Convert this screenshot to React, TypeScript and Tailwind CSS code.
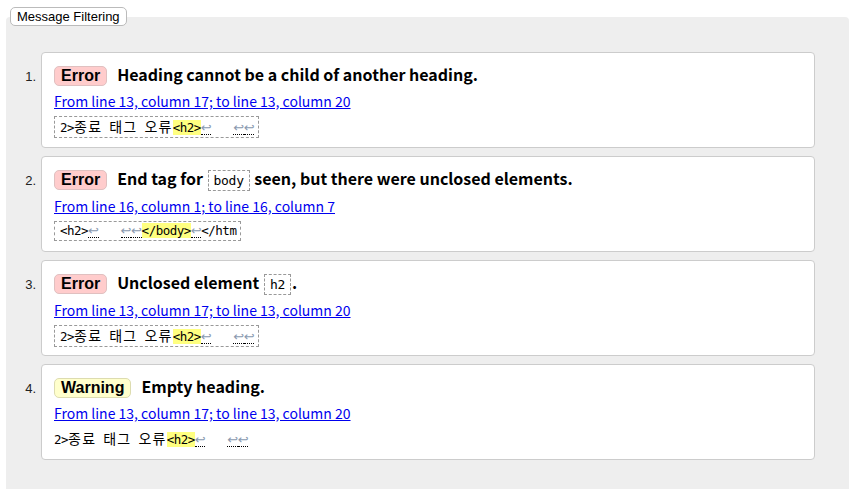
import React from 'react';

type Part = { t: string; kind?: 'hl' | 'lf' | 'gap' | 'ko' };

interface Message {
  level: 'Error' | 'Warning';
  text: React.ReactNode;
  loc: string;
  extract: Part[];
  boxed: boolean;
}

const koFont = "font-['Noto_Sans_CJK_KR','Liberation_Sans',sans-serif]";
const monoFont = "font-['DejaVu_Sans_Mono','Noto_Sans_CJK_KR',monospace]";

const Code = ({ children }: { children: React.ReactNode }) => (
  <code className={`${monoFont} font-normal text-[13px] tracking-[-0.3px] border border-dashed border-[#999] px-[5px] py-[2px] mx-[1px]`}>
    {children}
  </code>
);

const h2Extract: Part[] = [
  { t: '2>' },
  { t: '종료', kind: 'ko' },
  { t: ' ' },
  { t: '태그', kind: 'ko' },
  { t: ' ' },
  { t: '오류', kind: 'ko' },
  { t: '<h2>', kind: 'hl' },
  { t: '↩', kind: 'lf' },
  { t: '', kind: 'gap' },
  { t: '↩', kind: 'lf' },
  { t: '↩', kind: 'lf' },
];

const messages: Message[] = [
  {
    level: 'Error',
    text: <>Heading cannot be a child of another heading.</>,
    loc: 'From line 13, column 17; to line 13, column 20',
    extract: h2Extract,
    boxed: true,
  },
  {
    level: 'Error',
    text: <>End tag for <Code>body</Code> seen, but there were unclosed elements.</>,
    loc: 'From line 16, column 1; to line 16, column 7',
    extract: [
      { t: '<h2>' },
      { t: '↩', kind: 'lf' },
      { t: '', kind: 'gap' },
      { t: '↩', kind: 'lf' },
      { t: '↩', kind: 'lf' },
      { t: '</body>', kind: 'hl' },
      { t: '↩', kind: 'lf' },
      { t: '</htm' },
    ],
    boxed: true,
  },
  {
    level: 'Error',
    text: <>Unclosed element <Code>h2</Code>.</>,
    loc: 'From line 13, column 17; to line 13, column 20',
    extract: h2Extract,
    boxed: true,
  },
  {
    level: 'Warning',
    text: <>Empty heading.</>,
    loc: 'From line 13, column 17; to line 13, column 20',
    extract: h2Extract,
    boxed: false,
  },
];

const Extract = ({ parts, boxed }: { parts: Part[]; boxed: boolean }) => (
  <div className="flex">
    <code
      className={`${monoFont} text-[12.5px] tracking-[-0.5px] leading-[16px] whitespace-pre text-black ${
        boxed ? 'border border-dashed border-[#999] pl-[5px] pr-[4px] py-[1px]' : 'py-[2px]'
      }`}
    >
      {parts.map((p, i) => {
        if (p.kind === 'ko')
          return (
            <span key={i} className="font-['Noto_Sans_CJK_KR',sans-serif] text-[14px] tracking-[1.2px]">
              {p.t}
            </span>
          );
        if (p.kind === 'hl') return <b key={i} className="font-normal bg-[#ffff80]">{p.t}</b>;
        if (p.kind === 'lf')
          return (
            <span
              key={i}
              className="inline-block w-[10.5px] text-center font-['DejaVu_Sans',sans-serif] text-[13px] tracking-normal text-[#8a9ab0] border-b border-dotted border-black leading-[13px]"
            >
              {p.t}
            </span>
          );
        if (p.kind === 'gap') return <span key={i} className="inline-block w-[22px]" />;
        return <span key={i}>{p.t}</span>;
      })}
    </code>
  </div>
);

export default function App() {
  return (
    <div className="w-[855px] h-[489px] overflow-hidden bg-white px-[6px]">
      <div className="flex pt-[7px] pl-[4px]">
        <div className="relative z-10 bg-white border border-[#bbb] rounded-[5px] px-[6px] py-[1px] font-['Liberation_Sans',sans-serif] text-[13px] leading-[15px] text-black">
          Message Filtering
        </div>
      </div>
      <div className="-mt-[9px] bg-[#eeeeee] rounded-t-[4px] pt-[35px] pr-[34px] pb-[40px] h-[500px]">
        <ol className="flex flex-col gap-[8px]">
          {messages.map((m, i) => (
            <li key={i} className="flex items-baseline">
              <span className="w-[35px] pr-[5px] text-right font-['Liberation_Sans',sans-serif] text-[13px] text-[#222]">
                {i + 1}.
              </span>
              <div className="flex-1 bg-white border border-[#cccccc] rounded-[4px] pl-[12px] pt-[11px] pb-[10px] h-[96px]">
                <div className={`flex items-baseline gap-[10px] ${koFont} font-bold text-[16px] leading-[20px] text-black`}>
                  <span
                    className={`font-['Liberation_Sans',sans-serif] font-bold text-[16px] leading-[18px] px-[6px] border rounded-[5px] ${
                      m.level === 'Error' ? 'bg-[#ffcccc] border-[#e0c0c0]' : 'bg-[#ffffcc] border-[#dddcb0]'
                    }`}
                  >
                    {m.level}
                  </span>
                  <span>{m.text}</span>
                </div>
                <div className="mt-[5px] mb-[5px] leading-[20px]">
                  <a href="#" className={`${koFont} text-[14px] text-[#0000ee] underline`}>
                    {m.loc}
                  </a>
                </div>
                <Extract parts={m.extract} boxed={m.boxed} />
              </div>
            </li>
          ))}
        </ol>
      </div>
    </div>
  );
}
